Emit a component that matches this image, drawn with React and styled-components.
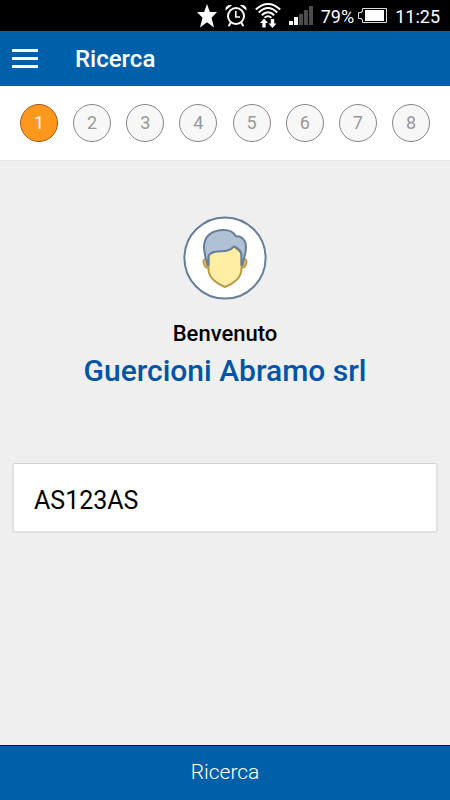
import React, { useState } from 'react';
import styled, { createGlobalStyle } from 'styled-components';

const steps = [1, 2, 3, 4, 5, 6, 7, 8];

const StatusIcons = () => (
  <Group $gap={8}>
    <Icon width="20" height="24" viewBox="0 0 20 24">
      <path
        fill="#fff"
        d="M10 0l2.900 8h7.100l-5.500 5.700L17 23.500 10 18.300 3 23.500l2.500-9.800L0 8h7.100z"
      />
    </Icon>
    <Icon width="22" height="23" viewBox="0 0 22 23" fill="none" stroke="#fff">
      <circle cx="11" cy="12" r="8" strokeWidth="2" />
      <path strokeWidth="1.600" d="M10.800 7v6H15" />
      <path
        fill="#fff"
        stroke="none"
        d="M.6 6.500C-.4 3 3 0 7 1.300zM21.400 6.500C22.400 3 19 0 15 1.300z"
      />
      <path strokeWidth="2" strokeLinecap="round" d="M5.500 19l-1.500 2.500M16.500 19l1.500 2.500" />
    </Icon>
    <Icon width="26" height="25" viewBox="0 0 26 25" fill="none" stroke="#fff">
      <path
        strokeWidth="2"
        d="M.8 6.500Q13-4.500 25.200 6.500M3.800 9.500Q13 .5 22.200 9.500M6.800 12.300Q13 6 19.200 12.300M9.600 14.800Q13 11.600 16.400 14.800"
      />
      <path
        fill="#fff"
        stroke="none"
        d="M9 15.500l4 4.500h-2.300v4.500H7.300V20H5zM17.500 25l4-4.500h-2.300V16h-3.400v4.500h-2.300z"
      />
    </Icon>
    <Icon width="24" height="19" viewBox="0 0 24 19">
      <path fill="#fff" d="M0 15h4v4H0zM5 11h4v8H5z" />
      <path fill="#4c4c4c" d="M10 8h4v11h-4zM15 4h4v15h-4zM20 0h4v19h-4z" />
    </Icon>
  </Group>
);

const BatteryIcon = () => (
  <Icon width="29" height="15" viewBox="0 0 29 15">
    <path
      fill="none"
      stroke="#ddd"
      d="M4.500 .5h24v14h-24v-3h-1v-1h-3v-6h3v-1h1z"
    />
    <path fill="#fff" d="M7 2h19v11H7z" />
  </Icon>
);

const AvatarIcon = () => (
  <svg width="84" height="84" viewBox="8 8 84 84" aria-hidden="true">
    <circle cx="50" cy="50" r="40.600" fill="#fff" stroke="#667f99" strokeWidth="2" />
    <path
      fill="#dbb65d"
      stroke="#ba9b48"
      strokeWidth="1.600"
      d="M30 51c-2.200.8-2 3.200-.8 6 .8 2 1.800 3 3.700 3h34.200c1.900 0 2.900-1 3.700-3 1.200-2.800 1.400-5.200-.8-6z"
    />
    <path
      fill="#ffeea3"
      stroke="#ba9b48"
      strokeWidth="2"
      d="M33.500 45v16c0 4.500 2 8 5 11 3.500 3.300 7 5.200 11.500 7 4.500-1.800 8-3.700 11.500-7 3-3 5-6.500 5-11V45L59 38l-22 5z"
    />
    <path
      fill="#b0c1d4"
      stroke="#667f99"
      strokeWidth="2"
      strokeLinejoin="round"
      d="M33.500 57H32.500c-.4-5-3.500-9-3.500-18C29 28 37 22 49 22c5.500 0 9.500 2 11.500 6C66.500 28 71 32 71 39c0 8-3.100 13-3.500 18h-1V48c0-4-2.500-7.500-7.500-9.500-7 7.500-15 3-22.500 6.500-2.500 1.200-3 2-3 4z"
    />
  </svg>
);

const App = () => {
  const [activeStep, setActiveStep] = useState(1);
  const [plate, setPlate] = useState('AS123AS');

  return (
    <Page>
      <GlobalStyle />
      <StatusBar>
        <StatusIcons />
        <Group $gap={4}>
          <StatusText>79%</StatusText>
          <BatteryIcon />
        </Group>
        <StatusText>11:25</StatusText>
      </StatusBar>
      <Header>
        <MenuButton type="button" aria-label="Menu">
          <MenuLine />
          <MenuLine />
          <MenuLine />
        </MenuButton>
        <Title>Ricerca</Title>
      </Header>
      <Steps>
        {steps.map((step) => (
          <Step
            key={step}
            type="button"
            $active={step === activeStep}
            onClick={() => setActiveStep(step)}
          >
            {step}
          </Step>
        ))}
      </Steps>
      <Content>
        <AvatarIcon />
        <Welcome>Benvenuto</Welcome>
        <Company>Guercioni Abramo srl</Company>
        <PlateInput
          type="text"
          aria-label="Targa"
          value={plate}
          onChange={(e) => setPlate(e.target.value)}
        />
      </Content>
      <SearchButton type="button">Ricerca</SearchButton>
    </Page>
  );
};

const GlobalStyle = createGlobalStyle`
  * {
    box-sizing: border-box;
  }
  body {
    margin: 0;
    font-family: Roboto, sans-serif;
    background: #efefef;
  }
  button,
  input {
    font-family: inherit;
  }
`;

const Page = styled.div`
  display: flex;
  flex-direction: column;
  min-height: 100vh;
`;

const StatusBar = styled.div`
  display: flex;
  align-items: center;
  justify-content: flex-end;
  gap: 8px;
  height: 31px;
  padding: 0 10px;
  background: #000;
  color: #fff;
`;

const Group = styled.div`
  display: flex;
  align-items: center;
  gap: ${({ $gap }) => $gap}px;
`;

const Icon = styled.svg.attrs({ 'aria-hidden': true })`
  flex: none;
`;

const StatusText = styled.span`
  padding-top: 2px;
  font-size: 18px;
  line-height: 29px;
`;

const Header = styled.header`
  display: flex;
  align-items: center;
  gap: 37px;
  height: 55px;
  padding: 0 12px;
  background: #005fa9;
`;

const MenuButton = styled.button`
  display: flex;
  flex-direction: column;
  justify-content: space-between;
  width: 26px;
  height: 19px;
  padding: 0;
  border: 0;
  background: none;
`;

const MenuLine = styled.span`
  width: 100%;
  height: 3px;
  background: #fff;
`;

const Title = styled.h1`
  margin: 0;
  color: #fff;
  font-size: 24px;
  font-weight: 500;
  line-height: 28px;
`;

const Steps = styled.nav`
  display: flex;
  align-items: center;
  justify-content: space-between;
  height: 75px;
  padding: 0 20px;
  border-bottom: 1px solid #e6e6e6;
  background: #fff;
`;

const Step = styled.button`
  width: 38px;
  height: 38px;
  padding: 0 0 2px;
  border: 1px solid ${({ $active }) => ($active ? '#a8560c' : '#868686')};
  border-radius: 50%;
  background: ${({ $active }) => ($active ? '#ff981d' : '#f7f7f7')};
  color: ${({ $active }) => ($active ? '#fff' : '#999')};
  font-size: 18px;
`;

const Content = styled.main`
  display: flex;
  flex: 1;
  flex-direction: column;
  align-items: center;
  padding: 55px 12px;
`;

const Welcome = styled.p`
  margin: 20px 0 0;
  color: #000;
  font-size: 22px;
  font-weight: 500;
  line-height: 28px;
`;

const Company = styled.h2`
  margin: 4px 0 0;
  color: #0054a6;
  font-size: 30px;
  font-weight: 500;
  line-height: 38px;
`;

const PlateInput = styled.input`
  width: 100%;
  height: 70px;
  margin-top: 73px;
  padding: 6px 20px 0;
  border: 2px solid #e2e2e2;
  border-top: 1px solid #d2d2d2;
  border-radius: 3px;
  outline: none;
  background: #fff;
  color: #000;
  font-size: 25px;
`;

const SearchButton = styled.button`
  height: 55px;
  padding: 0 0 2px;
  border: 0;
  border-top: 1px solid #00086b;
  background: #005fa9;
  color: #fff;
  font-size: 21px;
  font-weight: 300;
`;

export default App;
